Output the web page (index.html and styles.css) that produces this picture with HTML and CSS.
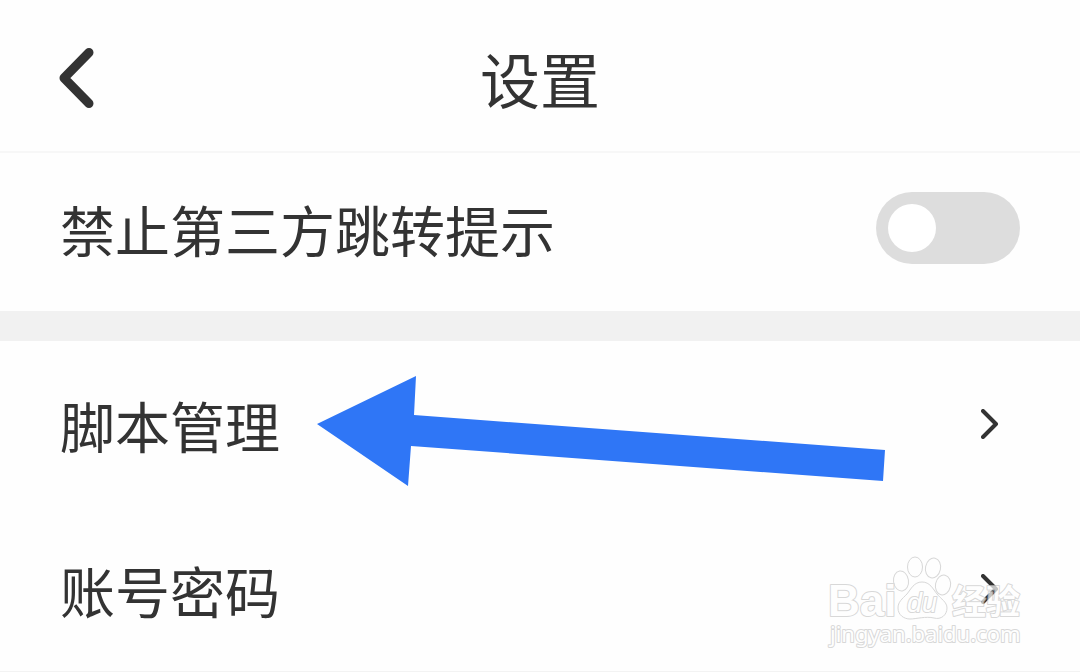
FILE: index.html
```html
<!DOCTYPE html>
<html lang="zh-CN">
<head>
<meta charset="utf-8">
<meta name="viewport" content="width=device-width, initial-scale=1">
<title>设置</title>
<link rel="stylesheet" href="styles.css">
</head>
<body>
<div class="page">
  <header class="header">
    <button class="back" type="button" aria-label="返回">
      <svg width="36" height="60" viewBox="0 0 36 60" aria-hidden="true"><path d="M31 4.500L6 30L31 55.500" fill="none" stroke="#333" stroke-width="9" stroke-linecap="round" stroke-linejoin="round"/></svg>
    </button>
    <h1 class="title">设置</h1>
  </header>
  <main>
    <section class="group">
      <div class="row row-first">
        <label class="label" for="block-jump">禁止第三方跳转提示</label>
        <input class="toggle" id="block-jump" type="checkbox" role="switch">
      </div>
    </section>
    <section class="group">
      <a class="row" href="#scripts">
        <span class="label">脚本管理</span>
        <svg class="chevron" width="18" height="30" viewBox="0 0 18 30" aria-hidden="true"><path d="M2 2L15 15L2 28" fill="none" stroke="#333" stroke-width="4" stroke-linecap="round" stroke-linejoin="round"/></svg>
      </a>
      <a class="row row-line" href="#accounts">
        <span class="label">账号密码</span>
        <svg class="chevron" width="18" height="30" viewBox="0 0 18 30" aria-hidden="true"><path d="M2 2L15 15L2 28" fill="none" stroke="#333" stroke-width="4" stroke-linecap="round" stroke-linejoin="round"/></svg>
      </a>
    </section>
  </main>
  <svg class="arrow" width="570" height="112" viewBox="0 0 570 112" aria-hidden="true"><path d="M1 49L100 1L98 40L569 75L567 106L95 71L92 111Z" fill="#2f76f6"/></svg>
  <svg class="watermark" width="200" height="100" viewBox="0 0 200 100">
    <g class="mark">
      <ellipse cx="88" cy="11" rx="7.500" ry="10"/>
      <ellipse cx="106" cy="12" rx="7.500" ry="10" transform="rotate(12 106 12)"/>
      <ellipse cx="74" cy="25" rx="7.500" ry="10" transform="rotate(-8 74 25)"/>
      <ellipse cx="116" cy="29" rx="7.500" ry="10" transform="rotate(12 116 29)"/>
      <path d="M95 26C87 26 84 33 80 38C75 43 71 46 71 52C71 59 77 63 83 63C89 63 99 60 107 62C114 64 120 59 120 52C120 46 114 43 110 38C106 33 103 26 95 26Z"/>
      <text class="wm-bai" x="1" y="60">Bai</text>
      <text class="wm-du" x="80" y="56">du</text>
      <text class="wm-cjk" x="125" y="58">经验</text>
      <text class="wm-url" x="3" y="86">jingyan.baidu.com</text>
    </g>
  </svg>
</div>
</body>
</html>
```
FILE: styles.css
```css
* {
  box-sizing: border-box;
}

body {
  margin: 0;
  background: #fefefe;
  color: #333;
  font-family: "Noto Sans CJK SC", sans-serif;
}

.page {
  position: relative;
  overflow: hidden;
}

.header {
  display: grid;
  grid-template-columns: 1fr auto 1fr;
  align-items: center;
  min-height: 153px;
  padding: 4px 58px 0;
  border-bottom: 2px solid #f7f7f7;
}

.back {
  display: flex;
  justify-self: start;
  padding: 0;
  border: 0;
  background: none;
}

.title {
  margin: 0;
  font-size: 60px;
  font-weight: 400;
  line-height: 80px;
}

.group + .group {
  border-top: 30px solid #f1f1f1;
}

.row {
  display: flex;
  align-items: center;
  justify-content: space-between;
  min-height: 165px;
  padding: 0 60px;
  color: inherit;
  text-decoration: none;
}

.row-first {
  min-height: 158px;
  padding-bottom: 8px;
}

.row-line {
  min-height: 166px;
  border-bottom: 1px solid #f3f3f3;
}

.label {
  font-size: 55px;
  line-height: 80px;
}

.toggle {
  display: flex;
  align-items: center;
  width: 144px;
  height: 72px;
  margin: 0;
  padding: 12px;
  border-radius: 36px;
  background: #ddd;
  appearance: none;
}

.toggle::before {
  width: 48px;
  height: 48px;
  border-radius: 50%;
  background: #fff;
  content: "";
}

.toggle:checked {
  justify-content: flex-end;
  background: #2f76f6;
}

.chevron {
  margin-right: 21px;
}

.arrow {
  position: absolute;
  top: 375px;
  left: 316px;
}

.watermark {
  position: absolute;
  right: 53px;
  bottom: 16px;
}

.mark {
  fill: #fff;
  stroke: #c8c8c8;
  stroke-width: 1px;
  opacity: 0.7;
}

.mark text {
  stroke-width: 2px;
  stroke-linejoin: round;
  paint-order: stroke;
}

.wm-bai {
  font: bold 44px "Liberation Sans", sans-serif;
}

.wm-du {
  font: italic 27px "Liberation Sans", sans-serif;
}

.wm-cjk {
  font: bold 34px "Noto Sans CJK SC", sans-serif;
}

.wm-url {
  font: 22px "Noto Sans", sans-serif;
}
```
